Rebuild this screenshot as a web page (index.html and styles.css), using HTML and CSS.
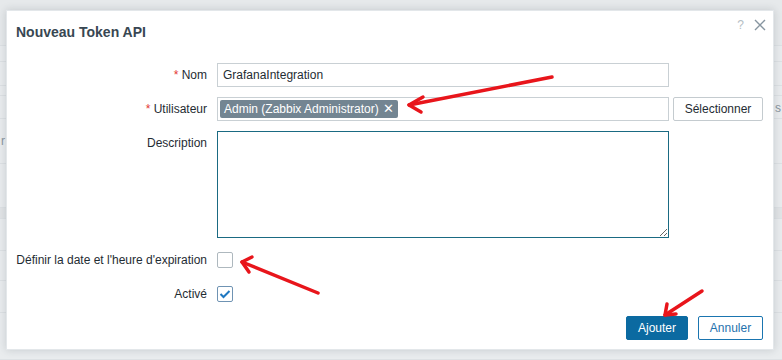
FILE: index.html
```html
<!DOCTYPE html>
<html>
<head>
  <title>Nouveau Token API</title>
  <link rel="stylesheet" href="styles.css">
</head>
<body>
  <div class="backdrop">
    <div class="bg-row bg-top"></div>
    <div class="bg-row h16"></div>
    <div class="bg-row h24"></div>
    <div class="bg-row h10"></div>
    <div class="bg-row h23"><span class="bg-txt-r">s</span></div>
    <div class="bg-row h45"><span class="bg-txt-l">r</span></div>
    <div class="bg-row h44"></div>
    <div class="bg-row bg-band"></div>
    <div class="bg-row h32"></div>
    <div class="bg-row h30"></div>
    <div class="bg-row h32"></div>
    <div class="bg-row h47"></div>
  </div>

  <div class="modal">
    <div class="modal-head">
      <h4>Nouveau Token API</h4>
      <div class="head-tools">
        <span class="help">?</span>
        <svg class="close" width="12" height="12" viewBox="0 0 12 12"><path d="M1 1L11 11M11 1L1 11" stroke="#8795a0" stroke-width="1.4" fill="none"/></svg>
      </div>
    </div>

    <form class="form-grid">
      <label class="lbl"><span class="req">*</span> Nom</label>
      <div class="field"><input class="txt" type="text" value="GrafanaIntegration"></div>

      <label class="lbl"><span class="req">*</span> Utilisateur</label>
      <div class="field">
        <div class="multiselect">
          <span class="tag">Admin (Zabbix Administrator) <span class="tag-x">✕</span></span>
        </div>
        <button type="button" class="btn-alt">Sélectionner</button>
      </div>

      <label class="lbl">Description</label>
      <div class="field"><textarea class="desc"></textarea></div>

      <label class="lbl">Définir la date et l'heure d'expiration</label>
      <div class="field"><span class="check"></span></div>

      <label class="lbl">Activé</label>
      <div class="field">
        <span class="check checked">
          <svg width="12" height="10" viewBox="0 0 12 10"><path d="M1.5 5L4.5 8L10.5 2" stroke="#1f78c1" stroke-width="2" fill="none"/></svg>
        </span>
      </div>
    </form>

    <div class="modal-foot">
      <button type="button" class="btn-main">Ajouter</button>
      <button type="button" class="btn-outline">Annuler</button>
    </div>
  </div>

  <!-- annotation arrows -->
  <svg class="marks" width="782" height="360" viewBox="0 0 782 360">
    <g stroke="#e8151b" stroke-width="3.5" stroke-linecap="round" stroke-linejoin="round" fill="none">
      <path d="M552 77L409 105"/>
      <path d="M423 97L409 105L421 112"/>
      <path d="M318 293L242 262"/>
      <path d="M252 257L242 262L249 272"/>
      <path d="M702 291L665 315"/>
      <path d="M667 304L665 315L676 314"/>
    </g>
  </svg>
</body>
</html>
```

FILE: styles.css
```css
body { margin: 0; width: 782px; height: 360px; overflow: hidden; background: #e9ecee; font-family: "Liberation Sans", Arial, sans-serif; font-size: 12px; color: #1f2c33; position: relative; }

.backdrop { display: flex; flex-direction: column; }
.bg-row { border-bottom: 1px solid #dde1e4; position: relative; box-sizing: border-box; }
.bg-top { height: 46px; background: #e6e9eb; }
.h10 { height: 10px; } .h16 { height: 16px; } .h23 { height: 23px; } .h24 { height: 24px; }
.h30 { height: 30px; } .h32 { height: 32px; } .h44 { height: 44px; } .h45 { height: 45px; } .h47 { height: 47px; }
.bg-band { height: 11px; background: #e1e4e6; }
.bg-txt-r { position: absolute; left: 775px; top: 5px; color: #8a969e; }
.bg-txt-l { position: absolute; left: 1px; top: 15px; color: #8a969e; }

.modal { position: absolute; left: 6px; top: 10px; width: 768px; height: 340px; box-sizing: border-box; background: #fff; border: 1px solid #e3e7ea; box-shadow: 0 0 8px rgba(40, 50, 60, 0.18); display: flex; flex-direction: column; padding: 0 10px 9px 9px; }

.modal-head { display: flex; justify-content: space-between; align-items: flex-start; height: 42px; padding-top: 13px; box-sizing: border-box; }
.modal-head h4 { margin: 0; font-size: 14px; line-height: 16px; font-weight: bold; color: #384752; }
.head-tools { display: flex; align-items: center; gap: 10px; margin-top: -6px; margin-right: -3px; }
.help { color: #b5bec4; font-size: 12px; }

.form-grid { display: grid; grid-template-columns: 191px 1fr; column-gap: 10px; row-gap: 10px; padding-top: 10px; }
.lbl { text-align: right; line-height: 24px; white-space: nowrap; }
.req { color: #e33734; }
.field { display: flex; align-items: center; gap: 4px; min-height: 24px; }

.txt { width: 452px; height: 24px; box-sizing: border-box; border: 1px solid #c9d0d4; padding: 0 5px; font: inherit; color: #1f2c33; margin: 0; }
.multiselect { width: 452px; height: 24px; box-sizing: border-box; border: 1px solid #c9d0d4; padding: 1px 2px; display: flex; align-items: center; }
.tag { background: #738592; color: #fff; height: 18px; line-height: 18px; padding: 0 4px 0 4px; border-radius: 2px; white-space: nowrap; }
.tag-x { font-size: 13px; margin-left: 1px; }

.btn-alt { height: 24px; width: 90px; box-sizing: border-box; background: #fff; border: 1px solid #c4cbcf; border-radius: 2px; font: inherit; color: #1f2c33; padding: 0; }

.desc { width: 452px; height: 107px; box-sizing: border-box; border: 1px solid #1a6a82; margin: 0; font: inherit; outline: none; }

.check { width: 16px; height: 16px; box-sizing: border-box; border: 1px solid #aeb8be; border-radius: 2px; background: #fff; display: flex; align-items: center; justify-content: center; }
.check.checked { border-color: #6f93b3; }

.modal-foot { margin-top: auto; display: flex; justify-content: flex-end; gap: 10px; }
.btn-main { height: 24px; width: 62px; box-sizing: border-box; background: #0b6aa1; color: #fff; border: 1px solid #0b6aa1; border-radius: 2px; font: inherit; padding: 0; }
.btn-outline { height: 24px; width: 65px; box-sizing: border-box; background: #fff; color: #1f72ad; border: 1px solid #1a75b0; border-radius: 2px; font: inherit; padding: 0; }

.marks { position: absolute; left: 0; top: 0; pointer-events: none; }
```
